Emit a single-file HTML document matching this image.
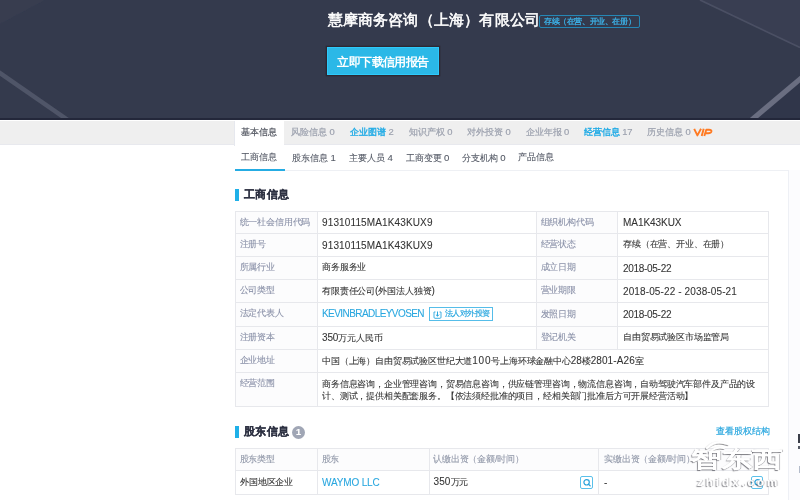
<!DOCTYPE html>
<html><head><meta charset="utf-8">
<style>
*{margin:0;padding:0;box-sizing:border-box}
html,body{width:800px;height:500px;overflow:hidden;background:#fff;font-family:"Liberation Sans",sans-serif;-webkit-font-smoothing:antialiased}
#root{position:absolute;left:0;top:0;width:800px;height:500px;will-change:transform;-webkit-text-stroke-width:0.2px}
td{-webkit-text-stroke-width:0.08px}
td.l{-webkit-text-stroke-width:0.1px}
tr>td:nth-child(4){padding-left:5px}
.abs{position:absolute;white-space:nowrap}
#hdr{position:absolute;left:0;top:0;width:800px;height:120px;background:#343a4d;overflow:hidden}
#hdr .shade{position:absolute;left:0;top:118px;width:800px;height:2px;background:#23273a}
.title{position:absolute;left:327.5px;top:9.5px;font-size:15.2px;letter-spacing:0.2px;color:#fff;-webkit-text-stroke:0.55px #fff;white-space:nowrap}
.badge{position:absolute;left:539px;top:15px;width:101px;height:13px;border:1px solid #2587b5;border-radius:2px;color:#3cb0e6;font-size:7.6px;letter-spacing:-0.4px;line-height:11px;padding-left:4px;white-space:nowrap;-webkit-text-stroke:0.3px #3cb0e6}
.btn{position:absolute;left:327px;top:47px;width:112px;height:28px;background:#2bb8e7;border:1px solid #2ec9fb;box-shadow:0 0 0 1.3px #2c2934;color:#fff;font-size:11.6px;letter-spacing:-0.55px;font-weight:bold;line-height:28px;text-align:center;white-space:nowrap;-webkit-text-stroke-width:0}
#tabs{position:absolute;left:0;top:121px;width:800px;height:24px;background:#efefef;border-bottom:1px solid #e8e9ee}
.tab{position:absolute;top:0;height:24px;line-height:21.5px;font-size:8.8px;color:#9ca1ae;white-space:nowrap}
.tab.act{background:#fff;color:#50545f;left:234px;width:49.5px;height:25px;text-align:center;border-left:1px solid #e6e8ee;line-height:22.5px}
.n{color:#9ca1ae;font-size:9.4px}
.blue{color:#1eaae5;-webkit-text-stroke-width:0.35px}
.blue .n{-webkit-text-stroke-width:0.15px}
#sub{position:absolute;left:235px;top:145px;width:553px;height:26px;border-bottom:1px solid #eef0f4}
.st{position:absolute;top:6px;line-height:13px;font-size:8.8px;color:#555a66;white-space:nowrap}
.st .m{font-size:9.6px}
.st{-webkit-text-stroke-width:0.1px}
.uline{position:absolute;left:235px;top:168.5px;width:50px;height:2px;background:#25ace3}
#rpanel{position:absolute;left:788px;top:170px;width:12px;height:330px;border-left:1px solid #eef0f5;background:#fcfcfe}
.sec{position:absolute;font-size:11.2px;letter-spacing:0.5px;font-weight:bold;color:#2d3142;white-space:nowrap}
.bar{position:absolute;width:4px;height:12px;background:#1fb0e8}
table{position:absolute;border-collapse:collapse;table-layout:fixed}
td{border:1px solid #e7e8ec;font-size:8.8px;letter-spacing:-0.16px;color:#333;padding:0.5px 5px 0 4px;white-space:nowrap}
.e{font-size:10px;letter-spacing:0}
td.l{background:#fcfcfd;color:#8b92a9;padding-left:3.6px}
.link{color:#2aa7df}
.ibadge{display:inline-block;vertical-align:middle;margin-left:5px;position:relative;top:-1px;height:13.5px;width:64px;border:1px solid #55bde9;color:#2aa7df;font-size:7.6px;letter-spacing:-0.5px;line-height:11.5px;padding-left:14.5px;-webkit-text-stroke:0.2px #2aa7df}
.srch{position:absolute;width:12.5px;height:12.5px;border:1px solid #5ac0ea;border-radius:2px;background:#fff}
</style></head><body><div id="root">
<div id="hdr">
  <svg width="800" height="120" style="position:absolute;left:0;top:0">
    <defs><filter id="bl" x="-10%" y="-10%" width="120%" height="120%"><feGaussianBlur stdDeviation="0.7"/></filter></defs>
    <polygon points="0,0 45,0 0,24" fill="#373c50" filter="url(#bl)"/>
    
    <line x1="-6" y1="69" x2="70" y2="121.5" stroke="#505567" stroke-width="4.5" filter="url(#bl)"/>
    <polygon points="700,0 800,0 800,48" fill="#393e52"/>
    <line x1="700" y1="0" x2="800" y2="47.5" stroke="#4b5064" stroke-width="1.6" filter="url(#bl)"/>
    <polygon points="752,120 800,80 800,120" fill="#30364a"/>
    <line x1="751.6" y1="120" x2="822.8" y2="60" stroke="#6a6e81" stroke-width="5.2" filter="url(#bl)"/>
  </svg>
  <div class="shade"></div>
  <div class="title">慧摩商务咨询（上海）有限公司</div>
  <div class="badge">存续（在营、开业、在册）</div>
  <div class="btn">立即下载信用报告</div>
</div>
<div id="tabs">
  <div class="tab act">基本信息</div>
  <div class="tab" style="left:291px">风险信息 <span class="n">0</span></div>
  <div class="tab blue" style="left:350px">企业图谱 <span class="n">2</span></div>
  <div class="tab" style="left:408.7px">知识产权 <span class="n">0</span></div>
  <div class="tab" style="left:467px">对外投资 <span class="n">0</span></div>
  <div class="tab" style="left:525.5px">企业年报 <span class="n">0</span></div>
  <div class="tab blue" style="left:583.7px">经营信息 <span class="n">17</span></div>
  <div class="tab" style="left:647px">历史信息 <span class="n">0</span></div>
  <svg class="abs" style="left:690px;top:5px" width="26" height="14" viewBox="0 0 26 14"><g fill="none" stroke="#ff7a22" stroke-width="1.9" stroke-linejoin="round" stroke-linecap="butt"><path d="M4.2 2.8L7.4 9.4L11 2.8"/><path d="M13.7 2.8L11.7 10"/><path d="M14.3 10L16.3 3.7H19Q21.9 3.7 21.4 5.6Q20.9 7.3 18.3 7.3H15.6"/></g></svg>
</div>
<div id="sub">
  <div class="st" style="left:5.5px">工商信息</div>
  <div class="st" style="left:57px">股东信息 <span class="m">1</span></div>
  <div class="st" style="left:114px">主要人员 <span class="m">4</span></div>
  <div class="st" style="left:170.5px">工商变更 <span class="m">0</span></div>
  <div class="st" style="left:226.7px">分支机构 <span class="m">0</span></div>
  <div class="st" style="left:283px">产品信息</div>
</div>
<div class="uline"></div>
<div id="rpanel"></div>

<div class="bar" style="left:235px;top:189px"></div>
<div class="sec" style="left:243.5px;top:187px">工商信息</div>

<table style="left:235px;top:210.5px;width:533px">
<colgroup><col style="width:82px"><col style="width:219px"><col style="width:81px"><col style="width:151px"></colgroup>
<tr style="height:22.8px"><td class="l">统一社会信用代码</td><td><span class="e" style="letter-spacing:0.13px">91310115MA1K43KUX9</span></td><td class="l">组织机构代码</td><td><span class="e" style="letter-spacing:-0.05px">MA1K43KUX</span></td></tr>
<tr style="height:22.8px"><td class="l">注册号</td><td><span class="e" style="letter-spacing:0.13px">91310115MA1K43KUX9</span></td><td class="l">经营状态</td><td>存续（在营、开业、在册）</td></tr>
<tr style="height:22.8px"><td class="l">所属行业</td><td>商务服务业</td><td class="l">成立日期</td><td><span class="e" style="letter-spacing:-0.3px">2018-05-22</span></td></tr>
<tr style="height:22.8px"><td class="l">公司类型</td><td>有限责任公司<span class="e">(</span>外国法人独资<span class="e">)</span></td><td class="l">营业期限</td><td><span class="e" style="letter-spacing:0.12px">2018-05-22 - 2038-05-21</span></td></tr>
<tr style="height:24.7px"><td class="l" style="padding-bottom:2px">法定代表人</td><td><span class="link e" style="letter-spacing:-0.57px">KEVINBRADLEYVOSEN</span><span class="ibadge"><svg style="position:absolute;left:2.5px;top:2.5px" width="9" height="8" viewBox="0 0 9 8"><path d="M2.5 1H1V6.2Q1 7.3 2 7.3H7Q8 7.3 8 6.2V1H6.5" fill="none" stroke="#2aa7df" stroke-width="0.9"/><path d="M4.5 0.5V5.2M2.9 3.6L4.5 5.2L6.1 3.6" fill="none" stroke="#2aa7df" stroke-width="1"/></svg>法人对外投资</span></td><td class="l">发照日期</td><td><span class="e" style="letter-spacing:-0.3px">2018-05-22</span></td></tr>
<tr style="height:22.7px"><td class="l">注册资本</td><td><span class="e" style="letter-spacing:-0.16px">350</span>万元人民币</td><td class="l">登记机关</td><td>自由贸易试验区市场监管局</td></tr>
<tr style="height:22.7px"><td class="l">企业地址</td><td colspan="3">中国（上海）自由贸易试验区世纪大道<span class="e" style="letter-spacing:0.77px">100</span>号上海环球金融中心<span class="e" style="letter-spacing:-0.1px">28</span>楼<span class="e" style="letter-spacing:0.1px">2801-A26</span>室</td></tr>
<tr style="height:34.5px"><td class="l" style="vertical-align:top;padding-top:5px">经营范围</td><td colspan="3" style="white-space:normal;line-height:12px">商务信息咨询，企业管理咨询，贸易信息咨询，供应链管理咨询，物流信息咨询，自动驾驶汽车部件及产品的设计、测试，提供相关配套服务。【依法须经批准的项目，经相关部门批准后方可开展经营活动】</td></tr>
</table>

<div class="bar" style="left:235px;top:426px"></div>
<div class="sec" style="left:243.5px;top:424px">股东信息</div>
<div class="abs" style="left:292px;top:426px;width:13px;height:13px;border-radius:50%;background:#a0a6b5;color:#fff;font-size:9px;line-height:13px;text-align:center;font-weight:bold">1</div>
<div class="abs link" style="left:716px;top:425.5px;font-size:8.8px;-webkit-text-stroke:0.2px #2aa7df">查看股权结构</div>

<table style="left:235px;top:447.5px;width:533px">
<colgroup><col style="width:82px"><col style="width:111.5px"><col style="width:169.5px"><col style="width:170px"></colgroup>
<tr style="height:22.8px"><td class="l" style="color:#9097a8">股东类型</td><td class="l" style="color:#9097a8">股东</td><td class="l" style="color:#9097a8">认缴出资（金额/时间）</td><td class="l" style="color:#9097a8">实缴出资（金额/时间）</td></tr>
<tr style="height:23.7px"><td>外国地区企业</td><td><span class="link e" style="letter-spacing:-0.15px">WAYMO LLC</span></td><td><span class="e" style="letter-spacing:0.1px">350</span>万元</td><td><span class="e">-</span></td></tr>
</table>
<div class="srch" style="left:580px;top:476px"><svg style="position:absolute;left:1px;top:1px" width="10" height="10" viewBox="0 0 10 10"><circle cx="4.6" cy="4.3" r="2.7" fill="none" stroke="#2aa3dc" stroke-width="1.2"/><path d="M6.6 6.3L8.2 7.9" stroke="#2aa3dc" stroke-width="1.3" stroke-linecap="round"/></svg></div>
<div class="srch" style="left:750.5px;top:476px"><svg style="position:absolute;left:1px;top:1px" width="10" height="10" viewBox="0 0 10 10"><circle cx="4.6" cy="4.3" r="2.7" fill="none" stroke="#2aa3dc" stroke-width="1.2"/><path d="M6.6 6.3L8.2 7.9" stroke="#2aa3dc" stroke-width="1.3" stroke-linecap="round"/></svg></div>
<div class="abs" style="left:798px;top:433.5px;width:2px;height:9px;background:#3a3d48"></div>
<div class="abs" style="left:798px;top:446px;width:2px;height:3px;background:#555964"></div>
<div class="abs" style="left:798.5px;top:466px;width:1.5px;height:7px;background:#b4bccb"></div>
<svg class="abs" style="left:700px;top:438px;overflow:visible" width="40" height="14" viewBox="0 0 40 14"><defs><filter id="ws" x="-30%" y="-50%" width="160%" height="200%"><feDropShadow dx="-0.8" dy="0.8" stdDeviation="0.7" flood-color="#2a2a35" flood-opacity="0.6"/></filter></defs><g filter="url(#ws)" fill="none" stroke="#fff" stroke-linecap="round"><path d="M7 10Q16 1 28 6" stroke-width="2.4"/><path d="M11 13Q17 8 24 10" stroke-width="2"/></g></svg>
<div class="abs" style="left:691px;top:437px;font-size:31px;line-height:36px;font-weight:900;color:#fff;letter-spacing:-0.5px;transform:scaleY(0.72);transform-origin:0 100%;text-shadow:-1px 1px 1px rgba(40,40,50,0.6),1px -0.5px 0.8px rgba(40,40,50,0.35)">智东西</div>
<div class="abs" style="left:697px;top:476px;font-size:11.5px;line-height:12px;font-weight:bold;color:#fff;letter-spacing:3px;text-shadow:-1px 1px 1px rgba(40,40,50,0.55),1px -0.5px 0.8px rgba(40,40,50,0.3)">zhidx.com</div>
</div></body></html>
